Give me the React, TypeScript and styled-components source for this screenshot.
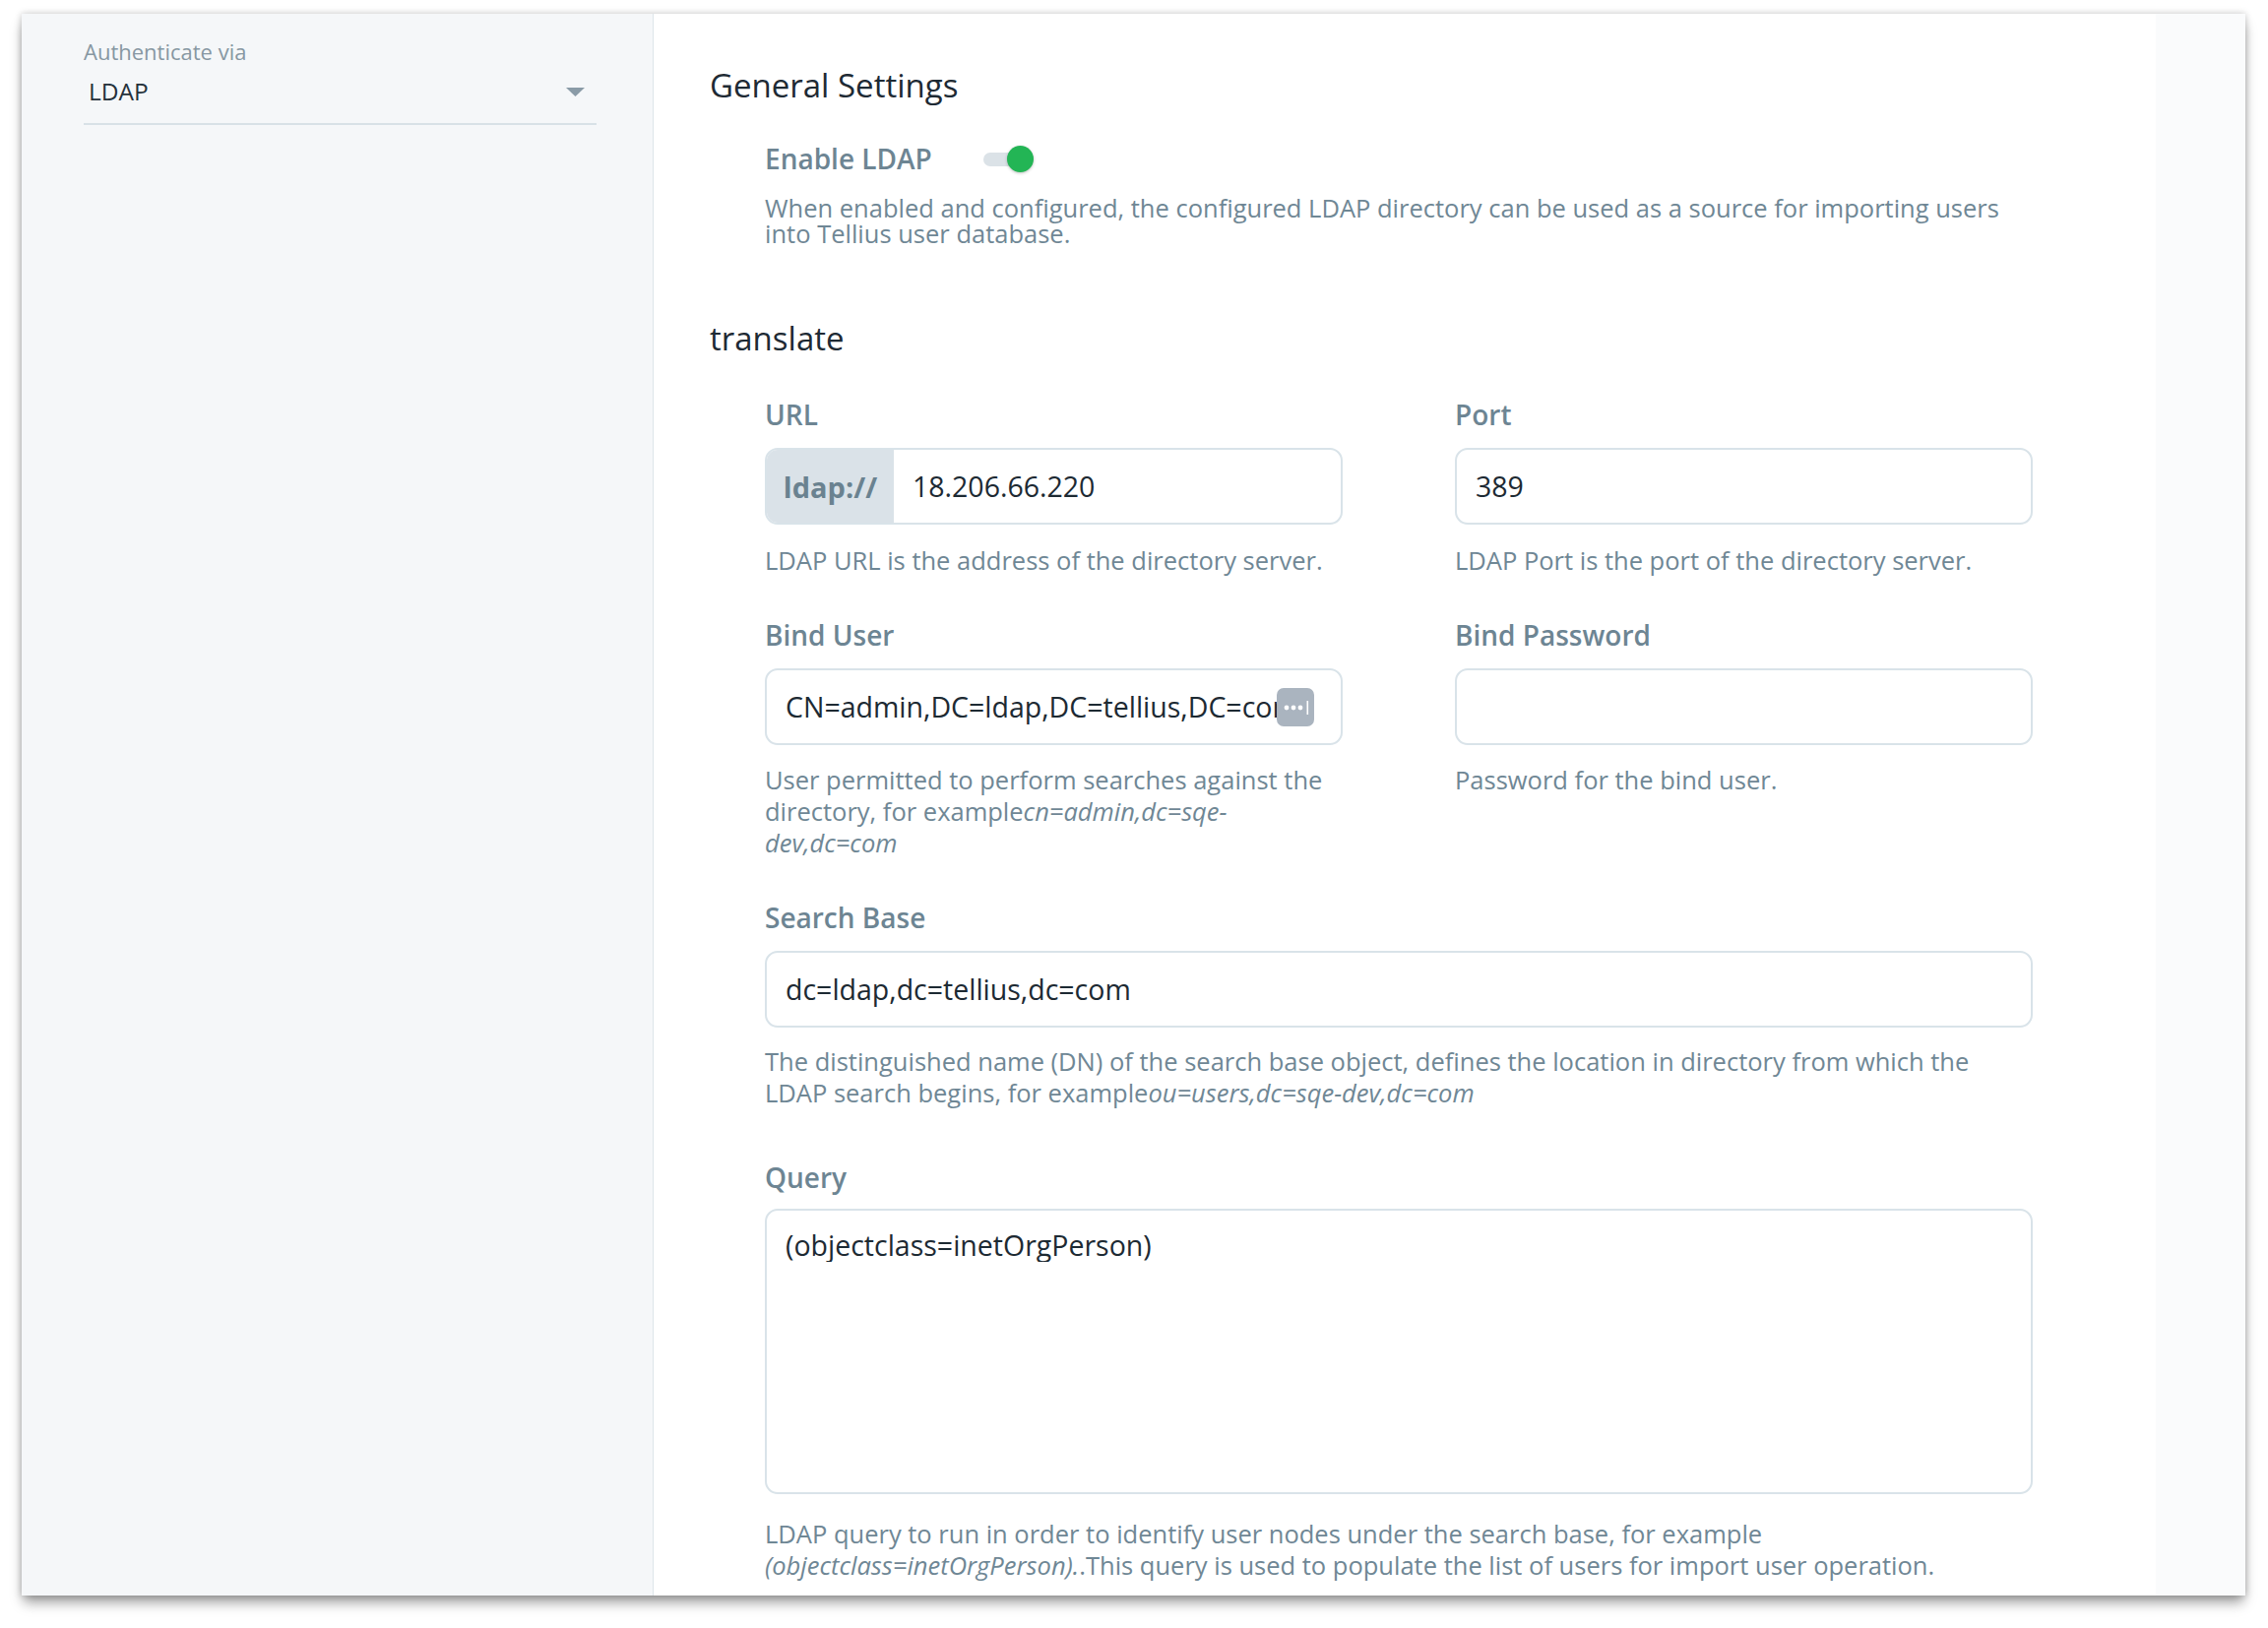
import React from 'react';
import styled, { createGlobalStyle } from 'styled-components';

const GlobalStyle = createGlobalStyle`
  html, body { margin: 0; padding: 0; background: #ffffff; }
  body { font-family: "Open Sans", "Noto Sans", Roboto, sans-serif; }
  * { box-sizing: border-box; }
`;

const Page = styled.div`
  width: 2304px;
  height: 1654px;
  padding: 14px 23px 0 22px;
  background: #ffffff;
`;

const Window = styled.div`
  display: flex;
  width: 2259px;
  height: 1607px;
  overflow: hidden;
  background: #ffffff;
  box-shadow: 0 9px 12px -2px rgba(0, 0, 0, 0.38), 0 0 7px rgba(0, 0, 0, 0.22);
`;

const Sidebar = styled.aside`
  flex: none;
  width: 642px;
  background: #f5f7f9;
  border-right: 1px solid #dde5ea;
  padding: 25px 57px 0 63px;
`;

const SideLabel = styled.div`
  font-size: 22px;
  line-height: 26px;
  color: #8797a2;
`;

const Select = styled.div`
  display: flex;
  align-items: center;
  justify-content: space-between;
  margin-top: 13px;
  padding: 0 12px 17px 5px;
  border-bottom: 2px solid #d8e1e7;
`;

const SelectValue = styled.span`
  font-size: 24.5px;
  line-height: 30px;
  color: #25313b;
`;

const Main = styled.main`
  flex: 1;
  padding: 53px 0 0 57px;
  background: linear-gradient(to right, #ffffff calc(100% - 91px), #fafbfc calc(100% - 91px));
`;

const SectionTitle = styled.h2<{ $top?: number }>`
  margin: ${(p) => p.$top ?? 0}px 0 0 0;
  font-size: 33px;
  line-height: 40px;
  font-weight: 400;
  color: #1e2a34;
`;

const Indent = styled.div`
  width: 1344px;
  padding-left: 56px;
`;

const ToggleRow = styled.div`
  display: flex;
  align-items: center;
  gap: 52px;
  margin-top: 38px;
`;

const Label = styled.div`
  font-size: 28px;
  line-height: 32px;
  font-weight: 600;
  color: #6d8593;
`;

const Toggle = styled.div`
  position: relative;
  width: 51px;
  height: 27px;
`;

const Track = styled.div`
  position: absolute;
  left: 0;
  top: 7px;
  width: 44px;
  height: 14px;
  border-radius: 7px;
  background: #dbe2e7;
`;

const Knob = styled.div`
  position: absolute;
  right: 0;
  top: 0;
  width: 27px;
  height: 27px;
  border-radius: 50%;
  background: #23b555;
  box-shadow: 0 1px 3px rgba(0, 0, 0, 0.25);
`;

const Description = styled.p`
  margin: 21px 0 0 0;
  font-size: 25.5px;
  line-height: 26px;
  color: #6f8795;
`;

const FieldGrid = styled.div`
  display: grid;
  grid-template-columns: 587px 587px;
  column-gap: 114px;
  row-gap: 44px;
  margin-top: 41px;
`;

const Field = styled.div<{ $wide?: boolean; $extraTop?: number }>`
  grid-column: ${(p) => (p.$wide ? '1 / span 2' : 'auto')};
  margin-top: ${(p) => p.$extraTop ?? 0}px;
  display: flex;
  flex-direction: column;
`;

const FieldLabel = styled(Label)<{ $gap?: number }>`
  margin-bottom: ${(p) => p.$gap ?? 18}px;
`;

const InputBox = styled.div<{ $height?: number; $alignTop?: boolean }>`
  position: relative;
  display: flex;
  align-items: ${(p) => (p.$alignTop ? 'flex-start' : 'stretch')};
  height: ${(p) => p.$height ?? 78}px;
  border: 2px solid #d9e3e9;
  border-radius: 13px;
  background: #ffffff;
  overflow: hidden;
`;

const Prefix = styled.div`
  flex: none;
  width: 129px;
  display: flex;
  align-items: center;
  justify-content: center;
  background: #dae2e8;
  font-size: 29px;
  font-weight: 700;
  color: #6a8290;
`;

const InputText = styled.div<{ $padRight?: number; $top?: number }>`
  flex: 1;
  display: flex;
  align-items: ${(p) => (p.$top !== undefined ? 'flex-start' : 'center')};
  padding: ${(p) => p.$top ?? 0}px ${(p) => p.$padRight ?? 20}px 0 19px;
  font-size: 28.5px;
  line-height: 34px;
  color: #1d2a33;
  white-space: nowrap;
  overflow: hidden;
`;

const MoreBadge = styled.div`
  position: absolute;
  right: 27px;
  top: 18px;
  width: 38px;
  height: 39px;
  border-radius: 7px;
  background: #aab4bf;
  display: flex;
  align-items: center;
  justify-content: center;
`;

const Helper = styled.p<{ $gap?: number }>`
  margin: ${(p) => p.$gap ?? 20}px 0 0 0;
  font-size: 25.5px;
  line-height: 32px;
  color: #6f8795;

  em {
    font-style: italic;
  }
`;

function SelectArrow() {
  return (
    <svg width="19" height="9" viewBox="0 0 19 9">
      <polygon points="0,0 19,0 9.5,9" fill="#8a9ba7" />
    </svg>
  );
}

function Dots() {
  return (
    <svg width="30" height="20" viewBox="0 0 30 20">
      <circle cx="6" cy="10" r="2.4" fill="#ffffff" />
      <circle cx="13" cy="10" r="2.4" fill="#ffffff" />
      <circle cx="20" cy="10" r="2.4" fill="#ffffff" />
      <rect x="26.5" y="3" width="1.6" height="14" fill="#ffffff" />
    </svg>
  );
}

export default function App() {
  return (
    <>
      <GlobalStyle />
      <Page>
        <Window>
          <Sidebar>
            <SideLabel>Authenticate via</SideLabel>
            <Select>
              <SelectValue>LDAP</SelectValue>
              <SelectArrow />
            </Select>
          </Sidebar>
          <Main>
            <SectionTitle>General Settings</SectionTitle>
            <Indent>
              <ToggleRow>
                <Label>Enable LDAP</Label>
                <Toggle>
                  <Track />
                  <Knob />
                </Toggle>
              </ToggleRow>
              <Description>
                When enabled and configured, the configured LDAP directory can be used as a source for importing users into Tellius user database.
              </Description>
            </Indent>
            <SectionTitle $top={74}>translate</SectionTitle>
            <Indent>
              <FieldGrid>
                <Field>
                  <FieldLabel>URL</FieldLabel>
                  <InputBox>
                    <Prefix>ldap://</Prefix>
                    <InputText>18.206.66.220</InputText>
                  </InputBox>
                  <Helper>LDAP URL is the address of the directory server.</Helper>
                </Field>
                <Field>
                  <FieldLabel>Port</FieldLabel>
                  <InputBox>
                    <InputText>389</InputText>
                  </InputBox>
                  <Helper>LDAP Port is the port of the directory server.</Helper>
                </Field>
                <Field>
                  <FieldLabel>Bind User</FieldLabel>
                  <InputBox>
                    <InputText $padRight={66}>CN=admin,DC=ldap,DC=tellius,DC=com</InputText>
                    <MoreBadge>
                      <Dots />
                    </MoreBadge>
                  </InputBox>
                  <Helper $gap={19}>
                    User permitted to perform searches against the directory, for example<em>cn=admin,dc=sqe-dev,dc=com</em>
                  </Helper>
                </Field>
                <Field>
                  <FieldLabel>Bind Password</FieldLabel>
                  <InputBox>
                    <InputText />
                  </InputBox>
                  <Helper $gap={19}>Password for the bind user.</Helper>
                </Field>
                <Field $wide>
                  <FieldLabel>Search Base</FieldLabel>
                  <InputBox>
                    <InputText>dc=ldap,dc=tellius,dc=com</InputText>
                  </InputBox>
                  <Helper $gap={18}>
                    The distinguished name (DN) of the search base object, defines the location in directory from which the LDAP search begins, for example<em>ou=users,dc=sqe-dev,dc=com</em>
                  </Helper>
                </Field>
                <Field $wide $extraTop={10}>
                  <FieldLabel $gap={16}>Query</FieldLabel>
                  <InputBox $height={290} $alignTop>
                    <InputText $top={18}>(objectclass=inetOrgPerson)</InputText>
                  </InputBox>
                  <Helper $gap={24}>
                    LDAP query to run in order to identify user nodes under the search base, for example <em>(objectclass=inetOrgPerson).</em>.This query is used to populate the list of users for import user operation.
                  </Helper>
                </Field>
              </FieldGrid>
            </Indent>
          </Main>
        </Window>
      </Page>
    </>
  );
}
